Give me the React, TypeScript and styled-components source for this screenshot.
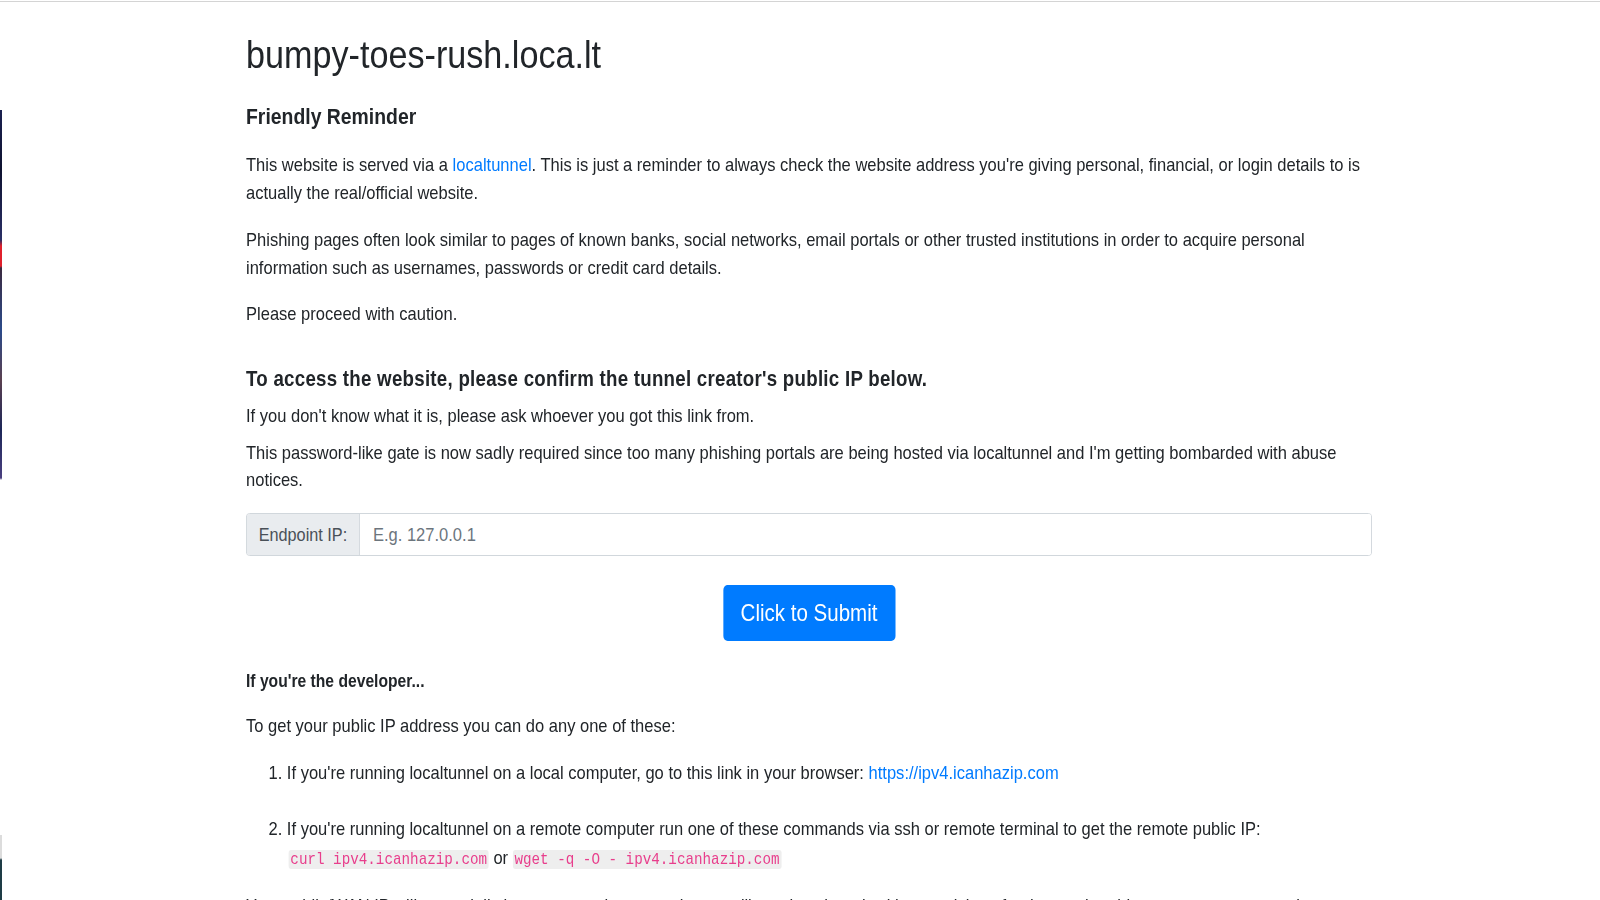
import React from "react";
import styled, { createGlobalStyle } from "styled-components";

/* The reference renders its text noticeably condensed; the page column is
   laid out at its natural width and squeezed horizontally to match. */
const SQUEEZE = 0.8695;

const Global = createGlobalStyle`
  html, body { margin: 0; padding: 0; background: #ffffff; }
  body {
    font-family: "Liberation Sans", Arial, sans-serif;
    color: #212529;
    overflow: hidden;
  }
`;

const Page = styled.div`
  margin-top: 1px;
  border-top: 1px solid #d4d4d4;
  min-height: 900px;
`;

const EdgeStrip = styled.div`
  position: fixed;
  left: 0;
  top: 0;
  width: 2px;
  height: 900px;
  background: linear-gradient(
    to bottom,
    transparent 0px,
    transparent 110px,
    #1b2150 110px,
    #0e1230 170px,
    #2a2f66 240px,
    #e0202c 246px,
    #e0202c 266px,
    #3b2a40 268px,
    #2b4a8a 330px,
    #5a4050 380px,
    #1d2758 430px,
    #4a3f80 478px,
    transparent 480px,
    transparent 835px,
    #dcdcdc 835px,
    #dcdcdc 858px,
    #1e3c46 860px,
    #1e3c46 900px
  );
`;

const Container = styled.main`
  width: 1295px;
  margin-left: 246px;
  transform: scaleX(${SQUEEZE});
  transform-origin: 0 0;
`;

const Title = styled.h1`
  margin: 28px 0 0;
  font-size: 39.3px;
  line-height: 48px;
  font-weight: 400;
`;

const SubTitle = styled.h4`
  margin: 25px 0 0;
  font-size: 22.3px;
  line-height: 28px;
  font-weight: 700;
`;

const Para = styled.p<{ $gap?: number }>`
  margin: ${(p) => p.$gap ?? 20}px 0 0;
  font-size: 19px;
  line-height: 27.5px;
`;

const Link = styled.a`
  color: #007bff;
  text-decoration: none;
`;

const GateHeading = styled.h5`
  margin: 39px 0 0;
  font-size: 21.5px;
  line-height: 26px;
  font-weight: 700;
  letter-spacing: 0.3px;
`;

const InputGroup = styled.div`
  margin-top: 19.5px;
  display: flex;
  height: 43px;
  border: 1px solid #ced4da;
  border-radius: 4px;
  box-sizing: border-box;
  overflow: hidden;
`;

const Addon = styled.span`
  width: 129px;
  flex: none;
  display: flex;
  align-items: center;
  justify-content: center;
  background: #e9ecef;
  border-right: 1px solid #ced4da;
  color: #495057;
  font-size: 18.7px;
`;

const IpInput = styled.input`
  flex: 1;
  border: none;
  outline: none;
  padding: 0 15px;
  font-family: inherit;
  font-size: 19px;
  color: #495057;
  background: #ffffff;
  &::placeholder { color: #6c757d; }
`;

const ButtonRow = styled.div`
  display: flex;
  justify-content: center;
  margin-top: 29px;
`;

const SubmitButton = styled.button`
  width: 198px;
  height: 56px;
  border: none;
  border-radius: 5px;
  background: #007bff;
  color: #ffffff;
  font-family: inherit;
  font-size: 23.6px;
  white-space: nowrap;
  cursor: pointer;
`;

const DevHeading = styled.p`
  margin: 26.5px 0 0;
  font-size: 18px;
  line-height: 27.5px;
  font-weight: 700;
`;

const Steps = styled.ol`
  margin: 18px 0 0;
  padding-left: 47px;
`;

const Step = styled.li`
  font-size: 19px;
  line-height: 29.5px;
  & + & { margin-top: 26.5px; }
`;

const Code = styled.code`
  font-family: "Liberation Mono", "Courier New", monospace;
  font-size: 16.4px;
  color: #e83e8c;
  background: #eeeeee;
  border-radius: 3px;
  padding: 0 2px;
  &:first-of-type { margin-left: 2px; }
`;

export default function App() {
  return (
    <>
      <Global />
      <Page>
        <EdgeStrip />
        <Container>
          <Title>bumpy-toes-rush.loca.lt</Title>
          <SubTitle>Friendly Reminder</SubTitle>
          <Para>
            This website is served via a <Link href="#">localtunnel</Link>. This is just a reminder to always check
            the website address you're giving personal, financial, or login details to is actually the real/official
            website.
          </Para>
          <Para>
            Phishing pages often look similar to pages of known banks, social networks, email portals or other
            trusted institutions in order to acquire personal information such as usernames, passwords or credit card
            details.
          </Para>
          <Para $gap={18.5}>Please proceed with caution.</Para>

          <GateHeading>To access the website, please confirm the tunnel creator's public IP below.</GateHeading>
          <Para $gap={9.5}>If you don't know what it is, please ask whoever you got this link from.</Para>
          <Para $gap={9.5}>
            This password-like gate is now sadly required since too many phishing portals are being hosted via
            localtunnel and I'm getting bombarded with abuse notices.
          </Para>

          <InputGroup>
            <Addon>Endpoint IP:</Addon>
            <IpInput placeholder="E.g. 127.0.0.1" />
          </InputGroup>
          <ButtonRow>
            <SubmitButton type="button">Click to Submit</SubmitButton>
          </ButtonRow>

          <DevHeading>If you're the developer...</DevHeading>
          <Para $gap={17}>To get your public IP address you can do any one of these:</Para>
          <Steps>
            <Step>
              If you're running localtunnel on a local computer, go to this link in your browser:{" "}
              <Link href="#">https://ipv4.icanhazip.com</Link>
            </Step>
            <Step>
              If you're running localtunnel on a remote computer run one of these commands via ssh or remote terminal
              to get the remote public IP:
              <br />
              <Code>curl ipv4.icanhazip.com</Code> or <Code>wget -q -O - ipv4.icanhazip.com</Code>
            </Step>
          </Steps>
          <Para $gap={17.5}>
            Your public/WAN IP will essentially be your tunnel password, so you'll need to share it with your visitors
            for them to be able to access your tunnel.
          </Para>
        </Container>
      </Page>
    </>
  );
}
